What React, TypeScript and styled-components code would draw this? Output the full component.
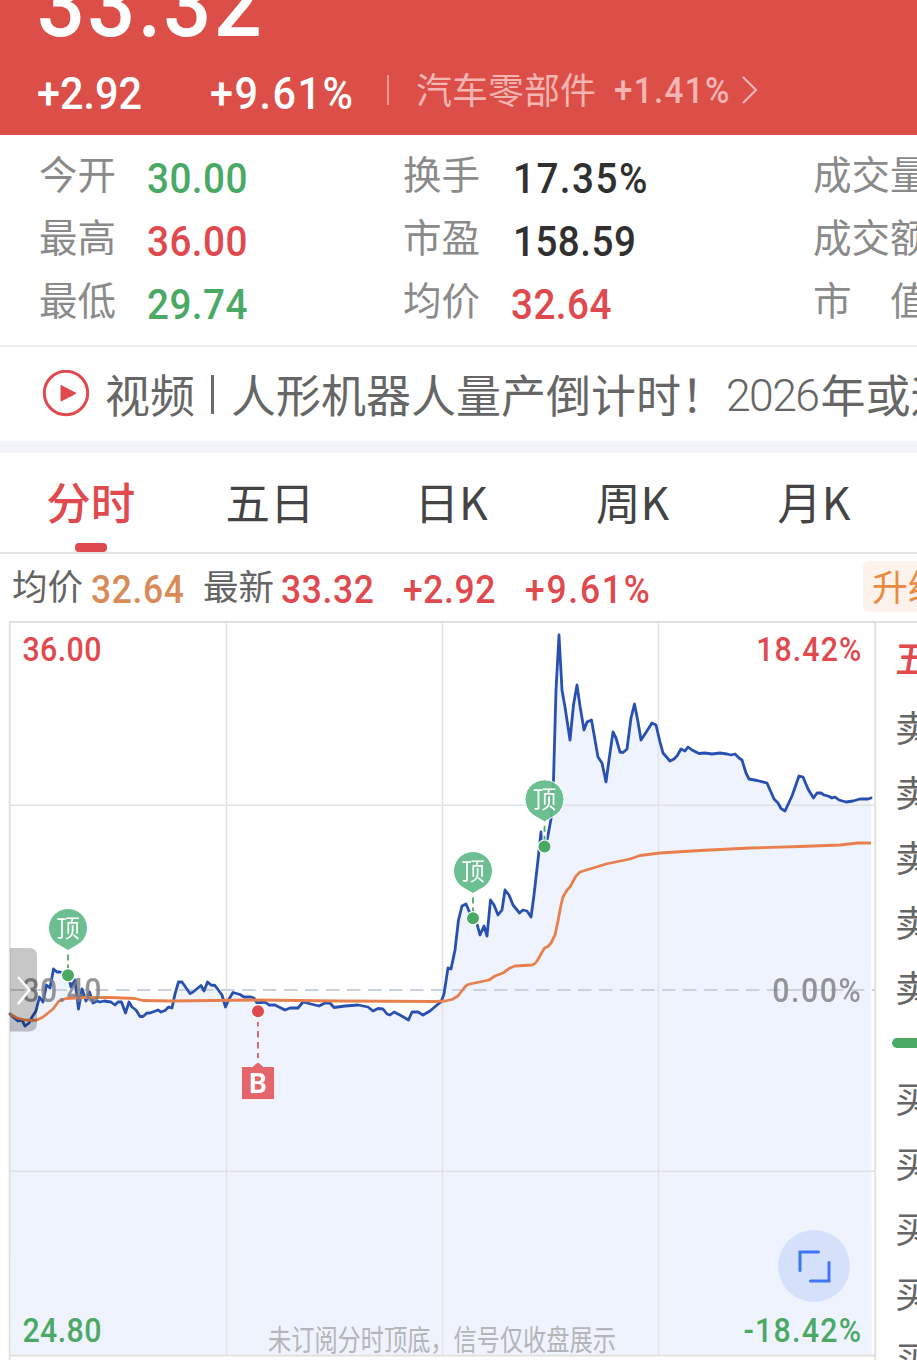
import React from "react";
import styled, { createGlobalStyle } from "styled-components";

const CJK = `"Noto Sans CJK SC", "Noto Sans", sans-serif`;
const DIN = `Roboto, "Noto Sans CJK SC", sans-serif`;
const RED = "#e0494d";
const GREEN = "#4aa964";

const GlobalStyle = createGlobalStyle`
  * { box-sizing: border-box; }
  body { margin: 0; background: #fff; font-family: ${CJK}; overflow: hidden; }
`;

const Page = styled.main`
  width: 917px;
  height: 1360px;
  overflow: hidden;
  background: #fff;
`;

/* Condensed numerals: narrowed glyphs with a little extra tracking. */
const Num = styled.span<{ $size: number; $color: string; $spacing?: number }>`
  display: inline-block;
  font-family: ${DIN};
  font-size: ${(p) => p.$size}px;
  font-weight: 500;
  letter-spacing: ${(p) => p.$spacing ?? 0}px;
  color: ${(p) => p.$color};
  line-height: 1;
  white-space: nowrap;
  transform: translate(1px, 1px) scaleX(0.92);
  transform-origin: left center;
`;

const Header = styled.header`
  height: 135px;
  background: #dc4f48;
  overflow: hidden;
`;

const Price = styled.div`
  height: 61px;
  margin-left: 36px;
  display: flex;
  align-items: flex-end;
  padding-bottom: 11px;
`;

const ChangeRow = styled.div`
  display: flex;
  align-items: center;
  height: 62px;
  padding-left: 36px;
`;

const Slot = styled.span<{ $w: number }>`
  display: flex;
  flex: none;
  width: ${(p) => p.$w}px;
`;

const Divider = styled.i`
  width: 2px;
  height: 30px;
  margin: 0 27px 4px 0;
  background: rgba(255, 255, 255, 0.4);
`;

const Sector = styled.div`
  display: flex;
  align-items: center;
  padding-bottom: 4px;
  color: #f5b5b2;
`;

const SectorName = styled.span`
  width: 197px;
  font-size: 36px;
  line-height: 36px;
  font-weight: 400;
  padding-bottom: 4px;
`;

const Stats = styled.section`
  height: 212px;
  padding: 9px 0 0 39px;
  border-bottom: 2px solid #ededed;
  display: grid;
  grid-template-columns: 364px 410px 200px;
  grid-auto-rows: 63px;
  overflow: hidden;
`;

const Stat = styled.div`
  display: flex;
  align-items: center;
`;

const StatLabel = styled.span`
  flex: none;
  width: 107px;
  font-size: 38.5px;
  line-height: 40px;
  font-weight: 400;
  color: #8a8a8a;
  white-space: pre;
  padding-bottom: 8px;
`;

const StatValue = styled.div<{ $indent?: boolean }>`
  padding: 5px 0 0 ${(p) => (p.$indent ? 2 : 0)}px;
  display: flex;
`;

const News = styled.section`
  height: 94px;
  display: flex;
  align-items: center;
  padding-left: 42px;
  overflow: hidden;
`;

const PlayIcon = styled.svg`
  flex: none;
`;

const NewsText = styled.span`
  margin-left: 15px;
  display: flex;
  align-items: center;
  font-size: 45px;
  line-height: 60px;
  font-weight: 400;
  color: #666;
  white-space: nowrap;
`;

const NewsBar = styled.i`
  width: 3px;
  height: 39px;
  margin: 0 17px 0 16px;
  background: #6a6a6a;
`;

const NewsYear = styled.span`
  font-family: ${DIN};
  font-size: 44.5px;
  font-weight: 300;
  letter-spacing: -1.6px;
  padding-top: 4px;
  margin-right: 2px;
`;

const Band = styled.div`
  height: 12px;
  background: #f2f4f9;
`;

const Tabs = styled.nav`
  height: 101px;
  display: grid;
  grid-template-columns: repeat(5, 181.3px);
  border-bottom: 2px solid #e3e3e3;
`;

const Tab = styled.div<{ $active?: boolean }>`
  display: flex;
  flex-direction: column;
  align-items: center;
  justify-content: space-between;
  padding: 20px ${(p) => (p.$active ? 0 : 4)}px 0 0;
  font-size: 44.5px;
  line-height: 56px;
  font-weight: ${(p) => (p.$active ? 500 : 400)};
  color: ${(p) => (p.$active ? RED : "#444")};
`;

const Marker = styled.i`
  width: 32px;
  height: 9px;
  border-radius: 4px;
  background: ${RED};
`;

const Quote = styled.section`
  height: 67px;
  display: flex;
  align-items: center;
  padding-left: 12px;
  overflow: hidden;
`;

const QuoteLabel = styled.span<{ $w: number }>`
  flex: none;
  width: ${(p) => p.$w}px;
  font-size: 35.5px;
  line-height: 40px;
  font-weight: 400;
  color: #646464;
  padding-bottom: 5px;
`;

const QuoteSlot = styled(Slot)`
  padding-top: 3px;
`;

const Upgrade = styled.span`
  flex: none;
  width: 90px;
  height: 51px;
  margin-bottom: 3px;
  padding-left: 9px;
  border-radius: 6px;
  background: #fef3ec;
  color: #eb8a40;
  font-size: 36px;
  line-height: 48px;
`;

const Body = styled.section`
  display: flex;
  height: 739px;
`;

const ChartSvg = styled.svg`
  flex: none;
  display: block;
`;

const Book = styled.aside`
  width: 41px;
  border-top: 2px solid #e0e0e0;
  padding-left: 19px;
  overflow: hidden;
`;

const BookTitle = styled.div`
  height: 73px;
  font-size: 37px;
  font-weight: 500;
  line-height: 68px;
  color: ${RED};
`;

const BookRow = styled.div`
  height: 65px;
  font-size: 36px;
  line-height: 61px;
  font-weight: 400;
  color: #666;
`;

const BookBar = styled.div`
  height: 10px;
  margin: 17px 0 19px -3px;
  border-radius: 5px 0 0 5px;
  background: ${GREEN};
`;

const PRICE =
  "10,1014 13,1017 18,1021 22,1020 25,1026 29,1023 32,1017 36,1011 39.5,997 43,1002 46.5,985 50,988 53.5,969 57,972 60,972 68,975 71,987 75,980 78.5,1009 82,989 86,1001 89.5,992 93,1003 97,1001 100,1002 104,1001 111,1002 115,1005 118,1002 121.5,1002 125.5,1013 129,1002 132,1007 136,1010 140,1016.5 143,1016.5 147,1013 150,1013 158,1010 161,1012 165,1010.5 168.5,1007 172,1008 175,994 178.5,982 182,982 190,993.5 193,992 201,985.5 204,991 207.5,982 211,985 215,985.5 222,995 225.5,1007 229,999 233,992.5 240,994.5 244,997 251,997 254,998 257,1003 265,1002 269,1005 275,1005 285,1010 290,1008 298,1008 303,1002 311,1004 319,1006 325,1003 330,1003 334,1007.5 345,1006 358,1005 368,1007 373,1011 378,1008.5 383,1009 387,1014 390,1015 394,1012 400,1015 408.5,1020 412,1012 418,1012 423,1015 430,1011 437,1005 441,1002 444,994 448,968 451,969 455,950 458.5,920 462,906 466,904 469,911 473,918 477,924 480,935 484,926 487,936 490.5,900 494,905 498,915 502,910 505,890 509,895 513,905 519.5,913 523,910 527,911 531,917 534,895 538,860 541,832 544.5,846 547.5,838 551,819 553.5,780 556,690 559,635 562,690 565,707 570,740 573.5,705 577,685 580,706 584,730 587,722 591.5,720 595,740 598,757 602,763 606,782 609,760 613,732 616,738 620,752 623,752.5 627,749 631,718 634.5,704 638,722 641,740 645,734 652,723 656,725 660,742 663,753 670,761 674,759 677,756 681,749 685,751 688,747 692,750 699,753.5 705,753 712,754 720,753 727,754 731,755 735,754 739,758 742,760 746,773 749,779 757,780.5 767,783 774,799 778,803 781,808.5 785,811 792,796 799,776 803,777 808,789 813.5,798 817,793 821,793 824,795 828,796 832,798 835,797 839,800 846,802 853,801 860,799 868,799 871,798";

const AVERAGE =
  "10,1014 17,1018 25,1020 32,1020.5 37,1020 43,1017 53,1009 56,1005 59,1001 66,998.5 85,997.5 110,997.5 135,998.5 139,999.5 143,1000.5 170,1001 258,1000 340,1001 435,1001.5 445,1001 452,999.5 458,996 464,988 467,985 470,984 489,980 495,976 503,973 510,968 515,966 532,965 535,963.5 537,961 544.5,948 548,946.5 551,943 555,935 558,921 561,905 563,897 567,890 570,887 576,876 580,872 606,864 630,859 640,855.5 660,853 700,850.5 750,848 800,846.5 840,845 858,843 871,843";

type AxisLabelProps = { x: number; y: number; color: string; end?: boolean; spacing?: number; children: string };

function AxisLabel({ x, y, color, end, spacing = 0.4, children }: AxisLabelProps) {
  return (
    <text
      transform={`translate(${x} ${y}) scale(.92 1)`}
      fill={color}
      fontFamily="Roboto, sans-serif"
      fontWeight={500}
      fontSize={33}
      textAnchor={end ? "end" : "start"}
      letterSpacing={spacing}
    >
      {children}
    </text>
  );
}

function TopPin({ x, y }: { x: number; y: number }) {
  return (
    <g>
      <path d={`M${x} ${y + 24}V${y + 42}`} stroke="#fff" strokeWidth={4} />
      <path d={`M${x} ${y + 26.5}V${y + 42}`} stroke={GREEN} strokeWidth={1.8} strokeDasharray="6 4" />
      <path
        d={`M${x} ${y + 22.5}L${x - 9} ${y + 17.3}A19.5 19.5 0 1 1 ${x + 9} ${y + 17.3}Z`}
        fill="#64bb8a"
        fillOpacity={0.94}
        stroke="#fff"
        strokeWidth={1}
      />
      <text x={x} y={y + 8.5} textAnchor="middle" fill="#fff" fontFamily="Noto Sans CJK SC, sans-serif" fontSize={23.5} fontWeight={400}>
        顶
      </text>
      <circle cx={x} cy={y + 47.3} r={6.6} fill={GREEN} stroke="#fff" strokeWidth={1.2} />
    </g>
  );
}

function Chart() {
  return (
    <ChartSvg width="876" height="739" viewBox="0 621 876 739">
      <polygon points={`11,1354 ${PRICE} 872,1354`} fill="#eff3fd" />
      <g stroke="#e1e2e5" strokeWidth={1.5} fill="none">
        <path d="M10 805.3H875M10 1171.3H875M226.5 622V1355M442.5 622V1355M658.5 622V1355" />
        <path d="M9 622H876M9 1355.5H876M9.7 622V1360M875.2 622V1360" stroke="#dfdfdf" strokeWidth={1.8} />
      </g>
      <path d="M11 990H875" stroke="#c9d2dc" strokeWidth={1.8} strokeDasharray="13.5 7.5" />
      <polyline points={PRICE} fill="none" stroke="#2850b0" strokeWidth={2.8} strokeLinejoin="round" strokeLinecap="round" />
      <polyline points={AVERAGE} fill="none" stroke="#e8804e" strokeWidth={2.8} strokeLinejoin="round" />

      <AxisLabel x={22.5} y={661} color={RED}>36.00</AxisLabel>
      <AxisLabel x={862.5} y={661} color={RED} end spacing={1.2}>18.42%</AxisLabel>
      <g opacity={0.8}>
        <AxisLabel x={22.5} y={1001.5} color="#7c7c80">30.40</AxisLabel>
        <AxisLabel x={862.5} y={1001.5} color="#7c7c80" end spacing={1.7}>0.00%</AxisLabel>
      </g>
      <AxisLabel x={22.5} y={1342} color={GREEN}>24.80</AxisLabel>
      <AxisLabel x={862.5} y={1342} color={GREEN} end spacing={1.4}>-18.42%</AxisLabel>
      <text transform="translate(268 1350.5) scale(.8 1)" fontFamily="Noto Sans CJK SC, sans-serif" fontSize={29} fontWeight={400} fill="#b4b5b9">
        未订阅分时顶底，信号仅收盘展示
      </text>

      <path d="M10 948H29Q37 948 37 956V1023Q37 1031.5 29 1031.5H10Z" fill="#000" fillOpacity={0.22} />
      <path d="M18 977L29.5 990L18 1004" fill="none" stroke="#fff" strokeWidth={2.5} />

      <TopPin x={68} y={928} />
      <TopPin x={473} y={871} />
      <TopPin x={544.5} y={799.3} />

      <path d="M258 1022V1058" stroke="#d2606c" strokeWidth={1.8} strokeDasharray="6.5 4.5" strokeDashoffset={2} />
      <circle cx={258} cy={1011.3} r={6.6} fill={RED} stroke="#fff" strokeWidth={1.2} />
      <path d="M241.3 1066.5H252.5L258 1061.8L263.5 1066.5H274.7V1099.7H241.3Z" fill="#e4666c" stroke="#fff" strokeWidth={1} />
      <text x={258} y={1093} textAnchor="middle" fill="#fff" fontFamily="Roboto, sans-serif" fontSize={28} fontWeight={700}>
        B
      </text>

      <circle cx={814} cy={1266} r={36} fill="#d5e0fb" />
      <path d="M818.5 1252H800V1270.5M810.5 1281H829V1262.5" fill="none" stroke="#3f76f6" strokeWidth={3} strokeLinecap="round" />
    </ChartSvg>
  );
}

const DARK = "#303030";
const stats: { label: string; value?: string; color?: string; spacing?: number; indent?: boolean }[] = [
  { label: "今开", value: "30.00", color: GREEN },
  { label: "换手", value: "17.35%", color: DARK, spacing: 1.6, indent: true },
  { label: "成交量" },
  { label: "最高", value: "36.00", color: RED },
  { label: "市盈", value: "158.59", color: DARK, indent: true },
  { label: "成交额" },
  { label: "最低", value: "29.74", color: GREEN },
  { label: "均价", value: "32.64", color: RED },
  { label: "市　值" },
];

export default function App() {
  return (
    <Page>
      <GlobalStyle />
      <Header>
        <Price>
          <Num $size={92} $color="#fff" $spacing={2.4}>33.32</Num>
        </Price>
        <ChangeRow>
          <Slot $w={173}><Num $size={45} $color="#fff">+2.92</Num></Slot>
          <Slot $w={178}><Num $size={45} $color="#fff" $spacing={1.6}>+9.61%</Num></Slot>
          <Divider />
          <Sector>
            <SectorName>汽车零部件</SectorName>
            <Slot $w={128}><Num $size={36} $color="#f5b5b2" $spacing={1.5}>+1.41%</Num></Slot>
            <svg width="18" height="28" viewBox="0 0 18 28" fill="none" stroke="#f5b5b2" strokeWidth="2.2">
              <path d="M2 1L15 14L2 27" />
            </svg>
          </Sector>
        </ChangeRow>
      </Header>

      <Stats>
        {stats.map(({ label, value, color = DARK, spacing = 0.5, indent }) => (
          <Stat key={label}>
            <StatLabel>{label}</StatLabel>
            {value && (
              <StatValue $indent={indent}>
                <Num $size={42} $color={color} $spacing={spacing}>{value}</Num>
              </StatValue>
            )}
          </Stat>
        ))}
      </Stats>

      <News>
        <PlayIcon width="48" height="48" viewBox="0 0 48 48">
          <circle cx="24" cy="23" r="21.7" fill="none" stroke={RED} strokeWidth="3" />
          <path d="M19 15.5L34 23.3L19 31Z" fill={RED} stroke={RED} strokeLinejoin="round" />
        </PlayIcon>
        <NewsText>
          视频<NewsBar />人形机器人量产倒计时！<NewsYear>2026</NewsYear>年或迎
        </NewsText>
      </News>
      <Band />
      <Tabs>
        <Tab $active>分时<Marker /></Tab>
        <Tab>五日</Tab>
        <Tab>日K</Tab>
        <Tab>周K</Tab>
        <Tab>月K</Tab>
      </Tabs>

      <Quote>
        <QuoteLabel $w={78}>均价</QuoteLabel>
        <QuoteSlot $w={113}><Num $size={38.5} $color="#d98a57" $spacing={0.7}>32.64</Num></QuoteSlot>
        <QuoteLabel $w={77}>最新</QuoteLabel>
        <QuoteSlot $w={122}><Num $size={38.5} $color={RED} $spacing={0.7}>33.32</Num></QuoteSlot>
        <QuoteSlot $w={122}><Num $size={38.5} $color={RED} $spacing={0.7}>+2.92</Num></QuoteSlot>
        <QuoteSlot $w={339}><Num $size={38.5} $color={RED} $spacing={1.9}>+9.61%</Num></QuoteSlot>
        <Upgrade>升级</Upgrade>
      </Quote>

      <Body>
        <Chart />
        <Book>
          <BookTitle>五</BookTitle>
          {[5, 4, 3, 2, 1].map((n) => <BookRow key={n}>卖</BookRow>)}
          <BookBar />
          {[1, 2, 3, 4, 5].map((n) => <BookRow key={n}>买</BookRow>)}
        </Book>
      </Body>
    </Page>
  );
}
